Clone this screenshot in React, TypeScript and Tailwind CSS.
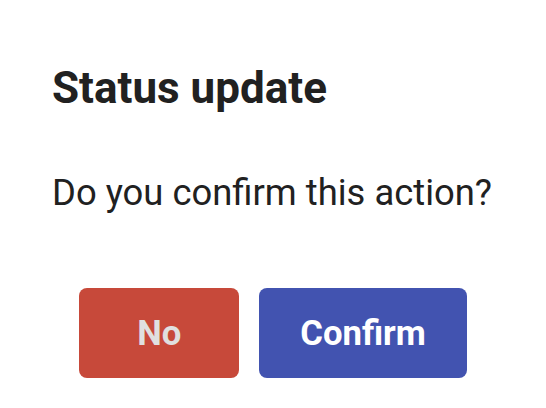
export default function App() {
  return (
    <div
      className="w-[546px] h-[408px] bg-white px-[52px] pt-[60px]"
      style={{ fontFamily: 'Roboto, "Liberation Sans", sans-serif' }}
    >
      <h2 className="text-[44px] leading-[56px] font-bold text-[#212121]">Status update</h2>
      <p className="mt-[55px] text-[36.4px] leading-[44px] text-[#212121]">Do you confirm this action?</p>
      <div className="mt-[73px] flex justify-center gap-[20px]">
        <button className="h-[90px] min-w-[160px] px-[41px] rounded-[8px] bg-[#c7493a] text-[34.7px] font-bold text-[#e0e0e0]">
          No
        </button>
        <button className="h-[90px] min-w-[160px] px-[41px] rounded-[8px] bg-[#4253b0] text-[34.7px] font-bold text-white">
          Confirm
        </button>
      </div>
    </div>
  );
}
